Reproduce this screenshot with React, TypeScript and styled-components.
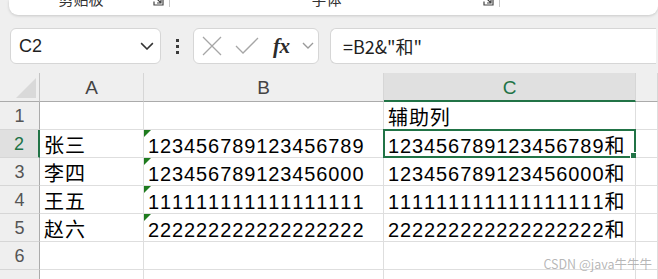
import styled, { createGlobalStyle } from "styled-components";

const GlobalStyle = createGlobalStyle`
  html, body {
    margin: 0;
    padding: 0;
    background: #efefef;
  }
  body {
    font-family: "Liberation Sans", "Noto Sans CJK SC", sans-serif;
    overflow: hidden;
  }
`;

const Page = styled.div`
  position: relative;
  width: 658px;
  height: 279px;
  overflow: hidden;
  background: #efefef;
`;

/* ---------- ribbon (cut off at top) ---------- */
const Ribbon = styled.div`
  display: flex;
  height: 15px;
  margin-left: 9px;
  background: #fff;
  border-radius: 0 0 9px 9px;
  box-shadow: 0 1px 3px rgba(0, 0, 0, 0.16);
  overflow: hidden;
`;

const RibbonGroup = styled.div<{ $w: number }>`
  display: flex;
  align-items: flex-start;
  width: ${(p) => p.$w}px;
  flex-shrink: 0;
`;

const GroupLabel = styled.div`
  flex: 1;
  text-align: center;
  font-family: "Noto Sans CJK SC", sans-serif;
  font-size: 15px;
  line-height: 20px;
  margin-top: -11px;
  color: #333;
`;

const Launcher = styled.svg`
  width: 11px;
  height: 11px;
  margin-top: -5px;
  margin-right: 5px;
  flex-shrink: 0;
`;

const GroupSep = styled.div`
  width: 1px;
  height: 7px;
  background: #c8c8c8;
  flex-shrink: 0;
`;

/* ---------- formula bar ---------- */
const FormulaRow = styled.div`
  display: flex;
  align-items: center;
  height: 36px;
  margin-top: 13px;
  padding-left: 10px;
`;

const Box = styled.div`
  box-sizing: border-box;
  height: 36px;
  background: #fff;
  border: 1px solid #d6d6d6;
  border-radius: 6px;
  display: flex;
  align-items: center;
`;

const NameBox = styled(Box)`
  width: 151px;
  justify-content: space-between;
  padding: 0 6px 0 8px;
  font-size: 18px;
  color: #1f1f1f;
`;

const Dots = styled.div`
  width: 32px;
  display: flex;
  flex-direction: column;
  align-items: center;
  gap: 3px;
  span {
    width: 3px;
    height: 3px;
    background: #3a3a3a;
  }
`;

const FuncBox = styled(Box)`
  width: 126px;
  padding: 0 4px 0 7px;
  gap: 12px;
`;

const Fx = styled.span`
  font-family: "Liberation Serif", serif;
  font-style: italic;
  font-weight: bold;
  font-size: 21px;
  color: #2b2b2b;
  margin-left: 2px;
  letter-spacing: -0.5px;
`;

const FormulaInput = styled(Box)`
  flex: 1;
  margin-left: 11px;
  margin-right: 2px;
  padding-left: 12px;
  font-family: "Noto Sans CJK SC", sans-serif;
  font-size: 18px;
  color: #1f1f1f;
  border-radius: 6px 0 0 6px;
  border-right: none;
`;

/* ---------- sheet ---------- */
const Sheet = styled.div`
  display: grid;
  grid-template-columns: 40px 104px 240px 252px 22px;
  grid-template-rows: 29px repeat(7, 28px);
  margin-top: 9px;
`;

const Corner = styled.div`
  box-sizing: border-box;
  background: #efefef;
  border-right: 1px solid #c4c4c4;
  border-bottom: 1px solid #ababab;
  display: flex;
  align-items: flex-end;
  justify-content: flex-end;
  padding: 0 3px 3px 0;
`;

const CornerMark = styled.div`
  width: 0;
  height: 0;
  border-left: 20px solid transparent;
  border-bottom: 20px solid #d9d9d9;
`;

const ColHeader = styled.div<{ $active?: boolean }>`
  box-sizing: border-box;
  background: ${(p) => (p.$active ? "#e0e0e0" : "#efefef")};
  border-right: 1px solid #d6d6d6;
  border-bottom: ${(p) => (p.$active ? "2px solid #217346" : "1px solid #ababab")};
  display: flex;
  align-items: center;
  justify-content: center;
  font-size: 19px;
  color: ${(p) => (p.$active ? "#217346" : "#444")};
  padding-top: 2px;
`;

const RowHeader = styled.div<{ $active?: boolean }>`
  box-sizing: border-box;
  background: ${(p) => (p.$active ? "#e0e0e0" : "#efefef")};
  border-right: ${(p) => (p.$active ? "2px solid #217346" : "1px solid #ababab")};
  border-bottom: 1px solid #d6d6d6;
  display: flex;
  align-items: center;
  justify-content: center;
  font-size: 18px;
  color: ${(p) => (p.$active ? "#217346" : "#555")};
  padding-top: 2px;
`;

const Cell = styled.div<{ $flag?: boolean }>`
  position: relative;
  box-sizing: border-box;
  background: #fff;
  border-right: 1px solid #dedede;
  border-bottom: 1px solid #dedede;
  display: flex;
  align-items: flex-end;
  padding: 0 0 1px 4px;
  font-size: 20px;
  line-height: 20px;
  letter-spacing: 0.9px;
  font-kerning: none;
  color: #000;
  white-space: nowrap;

  &::before {
    content: "";
    display: ${(p) => (p.$flag ? "block" : "none")};
    position: absolute;
    left: 0;
    top: 0;
    border-top: 7px solid #1e7b1e;
    border-right: 7px solid transparent;
  }
`;

const Selection = styled.div`
  position: absolute;
  left: -1px;
  top: -1px;
  right: -1px;
  bottom: -1px;
  border: 2px solid #217346;
  pointer-events: none;
`;

const FillHandle = styled.div`
  position: absolute;
  right: -4px;
  bottom: -4px;
  width: 6px;
  height: 6px;
  background: #217346;
  border: 1px solid #fff;
`;

const Watermark = styled.div`
  position: absolute;
  right: 6px;
  bottom: 6px;
  font-family: "Noto Sans CJK SC", sans-serif;
  font-size: 12.5px;
  color: rgba(160, 160, 160, 0.75);
`;

const LauncherIcon = () => (
  <Launcher viewBox="0 0 11 11">
    <path d="M1 6.5 V10 H10 V1 H6.5" fill="none" stroke="#444" strokeWidth="1.2" />
    <path d="M2.5 2.5 L8 8 M4 8 H8 V4" fill="none" stroke="#444" strokeWidth="1.2" />
  </Launcher>
);

const Chevron = ({ color, size }: { color: string; size: number }) => (
  <svg width={size} height={size * 0.6} viewBox="0 0 10 6">
    <path d="M0.8 0.8 L5 5 L9.2 0.8" fill="none" stroke={color} strokeWidth="1.1" />
  </svg>
);

const rows = [
  { a: "", b: "", c: "辅助列" },
  { a: "张三", b: "123456789123456789", c: "123456789123456789和" },
  { a: "李四", b: "123456789123456000", c: "123456789123456000和" },
  { a: "王五", b: "111111111111111111", c: "111111111111111111和" },
  { a: "赵六", b: "222222222222222222", c: "222222222222222222和" },
  { a: "", b: "", c: "" },
  { a: "", b: "", c: "" },
];

export default function App() {
  return (
    <Page>
      <GlobalStyle />
      <Ribbon>
        <RibbonGroup $w={161}>
          <GroupLabel>剪贴板</GroupLabel>
          <LauncherIcon />
          <GroupSep />
        </RibbonGroup>
        <RibbonGroup $w={330}>
          <GroupLabel>字体</GroupLabel>
          <LauncherIcon />
          <GroupSep />
        </RibbonGroup>
        <RibbonGroup $w={160} />
      </Ribbon>

      <FormulaRow>
        <NameBox>
          <span>C2</span>
          <Chevron color="#333" size={14} />
        </NameBox>
        <Dots>
          <span />
          <span />
          <span />
        </Dots>
        <FuncBox>
          <svg width="22" height="22" viewBox="0 0 22 22">
            <path d="M2 2 L20 20 M20 2 L2 20" stroke="#a6a6a6" strokeWidth="1.3" />
          </svg>
          <svg width="24" height="20" viewBox="0 0 24 20">
            <path d="M1 10 L8 17 L23 2" fill="none" stroke="#a6a6a6" strokeWidth="1.3" />
          </svg>
          <Fx>fx</Fx>
          <Chevron color="#9a9a9a" size={12} />
        </FuncBox>
        <FormulaInput>=B2&amp;"和"</FormulaInput>
      </FormulaRow>

      <Sheet>
        <Corner>
          <CornerMark />
        </Corner>
        <ColHeader>A</ColHeader>
        <ColHeader>B</ColHeader>
        <ColHeader $active>C</ColHeader>
        <ColHeader />
        {rows.map((r, i) => (
          <>
            <RowHeader key={`h${i}`} $active={i === 1}>
              {i < 6 ? i + 1 : ""}
            </RowHeader>
            <Cell key={`a${i}`}>{r.a}</Cell>
            <Cell key={`b${i}`} $flag={r.b !== ""}>
              {r.b}
            </Cell>
            <Cell key={`c${i}`}>
              {r.c}
              {i === 1 && (
                <Selection>
                  <FillHandle />
                </Selection>
              )}
            </Cell>
            <Cell key={`d${i}`} />
          </>
        ))}
      </Sheet>

      <Watermark>CSDN @java牛牛牛</Watermark>
    </Page>
  );
}
